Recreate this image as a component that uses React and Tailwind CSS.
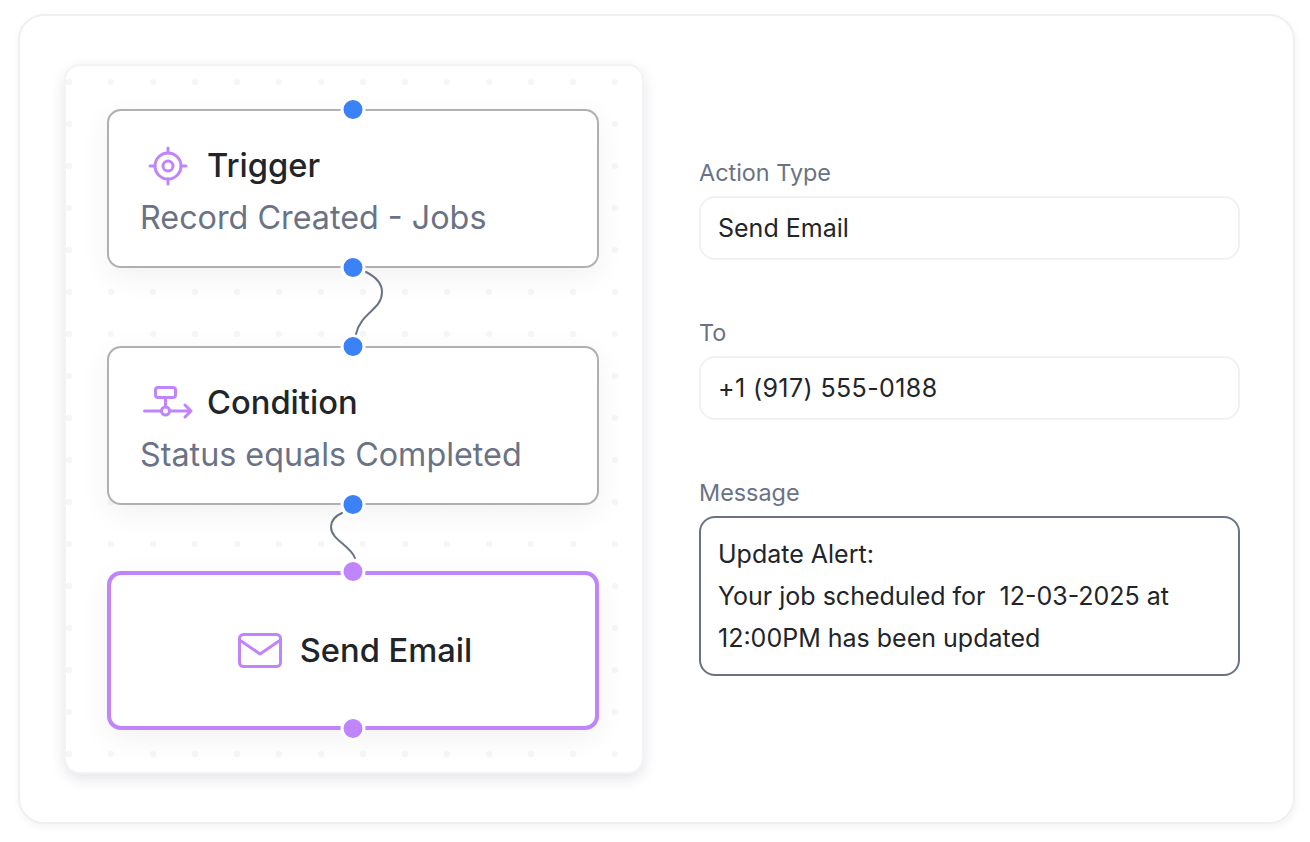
const font = { fontFamily: "Inter, sans-serif" };

function Handle({ color, pos }) {
  return (
    <span
      className={`absolute left-1/2 -translate-x-1/2 w-[25px] h-[25px] rounded-full border-[3px] border-white ${color} ${pos}`}
    />
  );
}

function TriggerIcon() {
  return (
    <svg width="40" height="40" viewBox="0 0 40 40" fill="none" stroke="#c084fc" strokeWidth="3" strokeLinecap="round">
      <circle cx="20" cy="20" r="13" />
      <circle cx="20" cy="20" r="5" />
      <path d="M20 2v5M20 33v5M2 20h5M33 20h5" />
    </svg>
  );
}

function ConditionIcon() {
  return (
    <svg width="50" height="34" viewBox="0 0 50 34" fill="none" stroke="#c084fc" strokeWidth="3" strokeLinecap="round" strokeLinejoin="round">
      <rect x="12.5" y="1.5" width="20" height="10" rx="2.5" />
      <path d="M22.5 11.5v9" />
      <path d="M1.5 25h17M27 25h21M42 19l6 6-6 6" />
      <circle cx="22.5" cy="25" r="4" />
    </svg>
  );
}

function MailIcon() {
  return (
    <svg width="44" height="35" viewBox="0 0 44 35" fill="none" stroke="#c084fc" strokeWidth="3" strokeLinecap="round" strokeLinejoin="round">
      <rect x="1.5" y="1.5" width="41" height="32" rx="4" />
      <path d="M3 8l19 13 19-13" />
    </svg>
  );
}

function Field({ label, value, valueClass }) {
  return (
    <div>
      <p className="text-[23.4px] leading-[30px] text-[#6a7386]">{label}</p>
      <div className={`mt-[8px] h-[64px] flex items-center px-[17px] pt-[2px] rounded-[16px] border-2 border-[#f1f1f3] bg-white text-[25px] text-[#212529] ${valueClass}`}>
        {value}
      </div>
    </div>
  );
}

export default function App() {
  return (
    <div className="w-[1310px] h-[842px] bg-white pl-[18px] pt-[14px] overflow-hidden" style={font}>
      <div className="w-[1277px] h-[810px] rounded-[26px] border-2 border-[#f0f0f2] bg-white shadow-[1px_3px_8px_rgba(0,0,0,0.05)] flex pl-[44px] pt-[48px]">
        {/* Canvas */}
        <div className="relative w-[580px] h-[710px] rounded-[16px] border-2 border-[#f3f3f5] bg-white bg-[radial-gradient(circle,#f6f6f7_3px,transparent_3.6px)] bg-[size:42px_42px] bg-[position:-18px_-5px] shadow-[0_5px_14px_rgba(40,40,80,0.12)] pl-[41px] pt-[43px]">
          {/* Trigger */}
          <div className="relative w-[492px] h-[159px] rounded-[14px] border-2 border-[#b0b0b4] bg-white shadow-[0_8px_30px_rgba(0,0,0,0.06)] pl-[31px] pt-[30px]">
            <Handle color="bg-[#3b82f6]" pos="-top-[14px]" />
            <div className="flex items-center h-[50px] pl-[8px]">
              <TriggerIcon />
              <span className="ml-[19px] text-[32.7px] font-medium text-[#212529]">Trigger</span>
            </div>
            <p className="mt-[2px] text-[32.3px] leading-[50px] text-[#6a7386]">Record Created - Jobs</p>
            <Handle color="bg-[#3b82f6]" pos="-bottom-[14px]" />
          </div>

          {/* Condition */}
          <div className="relative mt-[78px] w-[492px] h-[159px] rounded-[14px] border-2 border-[#b0b0b4] bg-white shadow-[0_8px_30px_rgba(0,0,0,0.06)] pl-[31px] pt-[30px]">
            <Handle color="bg-[#3b82f6]" pos="-top-[14px]" />
            <div className="flex items-center h-[50px] pl-[3px]">
              <ConditionIcon />
              <span className="ml-[14px] text-[32.7px] font-medium text-[#212529]">Condition</span>
            </div>
            <p className="mt-[2px] text-[32.3px] leading-[50px] text-[#6a7386]">Status equals Completed</p>
            <Handle color="bg-[#3b82f6]" pos="-bottom-[14px]" />
          </div>

          {/* Send Email */}
          <div className="relative mt-[66px] w-[492px] h-[159px] rounded-[14px] border-4 border-[#c084fc] bg-white shadow-[0_8px_30px_rgba(0,0,0,0.06)] flex items-center justify-center pl-[4px]">
            <Handle color="bg-[#c084fc]" pos="-top-[16px]" />
            <MailIcon />
            <span className="ml-[18px] text-[32.7px] font-medium text-[#212529]">Send Email</span>
            <Handle color="bg-[#c084fc]" pos="-bottom-[15px]" />
          </div>

          {/* Connectors */}
          <svg className="absolute left-0 top-0 pointer-events-none" width="576" height="706" viewBox="66 66 576 706" fill="none" stroke="#6a7386" strokeWidth="2" strokeLinecap="round">
            <path d="M366 272C376 277 382 283 382 292C382 310 361 312 356 334" />
            <path d="M342 513C335 516 331 520 331 527C331 540 350 545 355 558" />
          </svg>
        </div>

        {/* Form */}
        <div className="ml-[55px] w-[541px] pt-[94px] flex flex-col gap-[58px]">
          <Field label="Action Type" value="Send Email" />
          <Field label="To" value="+1 (917) 555-0188" valueClass="tracking-[0.4px]" />
          <div>
            <p className="text-[23.4px] leading-[30px] text-[#6a7386]">Message</p>
            <div className="mt-[8px] h-[160px] rounded-[16px] border-2 border-[#6a7386] bg-white px-[17px] pt-[15px] text-[25px] leading-[42px] text-[#212529] whitespace-pre-wrap">
              {"Update Alert:\nYour job scheduled for  12-03-2025 at\n12:00PM has been updated"}
            </div>
          </div>
        </div>
      </div>
    </div>
  );
}
